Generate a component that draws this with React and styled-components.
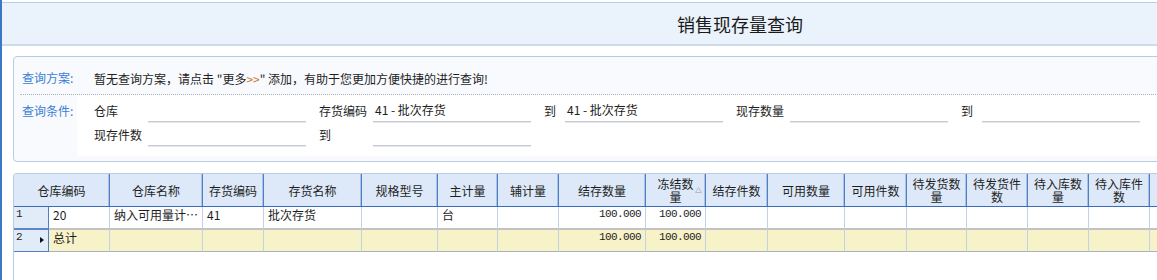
import React from "react";
import styled, { createGlobalStyle } from "styled-components";

const GlobalStyle = createGlobalStyle`
  html, body { margin: 0; padding: 0; background: #fff; }
  body {
    font-family: "Noto Sans CJK SC", "Liberation Sans", sans-serif;
    font-size: 12px;
    color: #1e1e1e;
  }
  * { box-sizing: border-box; }
`;

const Page = styled.div`
  display: flex;
  width: 1157px;
  height: 280px;
  overflow: hidden;
`;

const LeftBar = styled.div`
  flex: none;
  width: 2px;
  background: #3b77c4;
`;

const Main = styled.div`
  flex: 1;
  min-width: 0;
  display: flex;
  flex-direction: column;
  overflow: hidden;
`;

const TopStrip = styled.div`
  flex: none;
  height: 2px;
  background: #fff;
`;

const TitleBar = styled.div`
  flex: none;
  height: 44px;
  background: #eaf2fc;
  border-top: 1px solid #b8cee6;
  border-bottom: 2px solid #cddbea;
  display: flex;
  align-items: center;
  padding-left: 675px;
  font-size: 18px;
  color: #1a1a1a;
`;

const Panel = styled.div`
  flex: none;
  margin: 10px -20px 0 11px;
  border: 1px solid #b6cde6;
  border-radius: 4px;
  background: #f8fafd;
  padding-bottom: 5px;
`;

const PlanRow = styled.div`
  height: 37px;
  display: flex;
  align-items: center;
  padding: 5px 0 0 8px;
`;

const BlueLabel = styled.div`
  flex: none;
  width: ${(p) => p.$w}px;
  color: #3a80d4;
  line-height: 24px;
`;

const PlanText = styled.div`
  white-space: nowrap;
  color: #1e1e1e;
`;

const Orange = styled.span`
  color: #c9782a;
`;

const Divider = styled.div`
  margin-left: 6px;
  border-top: 1px dotted #aab2bc;
`;

const CondRow = styled.div`
  display: flex;
  align-items: flex-start;
  padding-left: 8px;
`;

const CondLabelWrap = styled.div`
  padding-top: 4px;
`;

const CondBox = styled.div`
  flex: 1;
  background: #fff;
  padding: 4px 0 9px 17px;
  display: flex;
  flex-direction: column;
`;

const FieldRow = styled.div`
  display: flex;
  height: 24px;
`;

const FieldLabel = styled.div`
  flex: none;
  width: ${(p) => p.$w}px;
  line-height: 24px;
  white-space: nowrap;
`;

const Input = styled.div`
  flex: none;
  width: 158px;
  height: 23px;
  margin-right: 13px;
  border-bottom: 1px solid #c6cad0;
  box-shadow: 0 1px 0 #e6e8eb;
  line-height: 22px;
  padding-left: 2px;
  white-space: nowrap;
`;

const Grid = styled.div`
  flex: 1;
  margin: 11px 0 0 11px;
  border-top: 1px solid #b6cde6;
  border-left: 1px solid #b6cde6;
  border-top-left-radius: 4px;
  overflow: hidden;
  display: flex;
  flex-direction: column;
`;

const HeadRow = styled.div`
  display: flex;
  flex: none;
  height: 33px;
  border-bottom: 1px solid #3a6cbe;
  background: #dde9f9;
`;

const HeadCell = styled.div`
  position: relative;
  flex: none;
  width: ${(p) => p.$w}px;
  height: 32px;
  display: flex;
  align-items: center;
  justify-content: center;
  text-align: center;
  white-space: pre-line;
  line-height: 13px;
  color: #1e1e1e;
  border-right: 1px solid #4f7fc4;
  box-shadow: inset -1px 0 0 #aac3e6;
`;

const SortMark = styled.svg`
  position: absolute;
  right: 3px;
  top: 13px;
`;

const Row = styled.div`
  display: flex;
  flex: none;
`;

const RowNum = styled.div`
  flex: none;
  width: 35px;
  height: ${(p) => (p.$thick ? 23 : 22)}px;
  background: #e2ecf9;
  border-right: 1px solid #4d7ec6;
  border-bottom: ${(p) => (p.$thick ? "2px solid #5a88c8" : "1px solid #4d7ec6")};
  display: flex;
  justify-content: space-between;
  align-items: flex-start;
  padding: 0 4px 0 2px;
  font-family: "Liberation Mono", monospace;
  font-size: 11px;
  line-height: 15px;
`;

const Arrow = styled.span`
  margin-top: 7px;
  width: 0;
  height: 0;
  border-left: 4px solid #111;
  border-top: 3.5px solid transparent;
  border-bottom: 3.5px solid transparent;
`;

const Cell = styled.div`
  flex: none;
  width: ${(p) => p.$w}px;
  height: ${(p) => (p.$total ? 22 : 23)}px;
  background: ${(p) => (p.$total ? "#f8f2c8" : "#fff")};
  border-right: 1px solid #c4d1e4;
  border-bottom: ${(p) => (p.$total ? "1px solid #a3b4ca" : "2px solid #c2c2c2")};
  padding: ${(p) => (p.$num ? "0 4px 0 2px" : "0 1px 0 4px")};
  line-height: 15px;
  text-align: ${(p) => (p.$num ? "right" : "left")};
  white-space: nowrap;
  overflow: hidden;
  text-overflow: ellipsis;
  font-family: ${(p) =>
    p.$num
      ? '"Liberation Mono", monospace'
      : '"Noto Sans CJK SC", "Liberation Sans", sans-serif'};
  font-size: ${(p) => (p.$num ? "11px" : "12px")};
  letter-spacing: ${(p) => (p.$num ? "-0.6px" : "0")};
`;

const Filler = styled.div`
  flex: 1;
  background: #fff;
`;

const columns = [
  { key: "whCode", title: "仓库编码", w: 61 },
  { key: "whName", title: "仓库名称", w: 93 },
  { key: "invCode", title: "存货编码", w: 61 },
  { key: "invName", title: "存货名称", w: 98 },
  { key: "spec", title: "规格型号", w: 76 },
  { key: "unit", title: "主计量", w: 60 },
  { key: "unit2", title: "辅计量", w: 61 },
  { key: "qty", title: "结存数量", w: 87, num: true },
  { key: "frozen", title: "冻结数\n量", w: 60, num: true, sort: true },
  { key: "pcs", title: "结存件数", w: 62, num: true },
  { key: "avail", title: "可用数量", w: 77, num: true },
  { key: "availPcs", title: "可用件数", w: 62, num: true },
  { key: "toShip", title: "待发货数\n量", w: 60, num: true },
  { key: "toShipPcs", title: "待发货件\n数", w: 61, num: true },
  { key: "toIn", title: "待入库数\n量", w: 61, num: true },
  { key: "toInPcs", title: "待入库件\n数", w: 61, num: true },
  { key: "more", title: "", w: 80 },
];

const rows = [
  {
    no: "1",
    whCode: "20",
    whName: "纳入可用量计算的仓库",
    invCode: "41",
    invName: "批次存货",
    unit: "台",
    qty: "100.000",
    frozen: "100.000",
  },
  { no: "2", total: true, whCode: "总计", qty: "100.000", frozen: "100.000" },
];

export default function App() {
  return (
    <>
      <GlobalStyle />
      <Page>
        <LeftBar />
        <Main>
          <TopStrip />
          <TitleBar>销售现存量查询</TitleBar>
          <Panel>
            <PlanRow>
              <BlueLabel $w={72}>查询方案:</BlueLabel>
              <PlanText>
                暂无查询方案，请点击 "更多<Orange>&gt;&gt;</Orange>" 添加，有助于您更加方便快捷的进行查询!
              </PlanText>
            </PlanRow>
            <Divider />
            <CondRow>
              <CondLabelWrap>
                <BlueLabel $w={55}>查询条件:</BlueLabel>
              </CondLabelWrap>
              <CondBox>
                <FieldRow>
                  <FieldLabel $w={54}>仓库</FieldLabel>
                  <Input />
                  <FieldLabel $w={54}>存货编码</FieldLabel>
                  <Input>41 - 批次存货</Input>
                  <FieldLabel $w={21}>到</FieldLabel>
                  <Input>41 - 批次存货</Input>
                  <FieldLabel $w={54}>现存数量</FieldLabel>
                  <Input />
                  <FieldLabel $w={21}>到</FieldLabel>
                  <Input />
                </FieldRow>
                <FieldRow>
                  <FieldLabel $w={54}>现存件数</FieldLabel>
                  <Input />
                  <FieldLabel $w={54}>到</FieldLabel>
                  <Input />
                </FieldRow>
              </CondBox>
            </CondRow>
          </Panel>
          <Grid>
            <HeadRow>
              {columns.map((c, i) => (
                <HeadCell key={c.key} $w={i === 0 ? c.w + 35 : c.w}>
                  {c.title}
                  {c.sort && (
                    <SortMark width="7" height="6" viewBox="0 0 7 6">
                      <path d="M3.5 0.5 L6.5 5.5 L0.5 5.5 Z" fill="none" stroke="#b4bccb" strokeWidth="1" />
                    </SortMark>
                  )}
                </HeadCell>
              ))}
            </HeadRow>
            {rows.map((r) => (
              <Row key={r.no}>
                <RowNum $thick={!r.total}>
                  <span>{r.no}</span>
                  {r.total && <Arrow />}
                </RowNum>
                {columns.map((c) => (
                  <Cell
                    key={c.key}
                    $w={c.w}
                    $num={c.num}
                    $total={r.total}
                    title={r[c.key] || undefined}
                  >
                    {r[c.key] || ""}
                  </Cell>
                ))}
              </Row>
            ))}
            <Filler />
          </Grid>
        </Main>
      </Page>
    </>
  );
}
